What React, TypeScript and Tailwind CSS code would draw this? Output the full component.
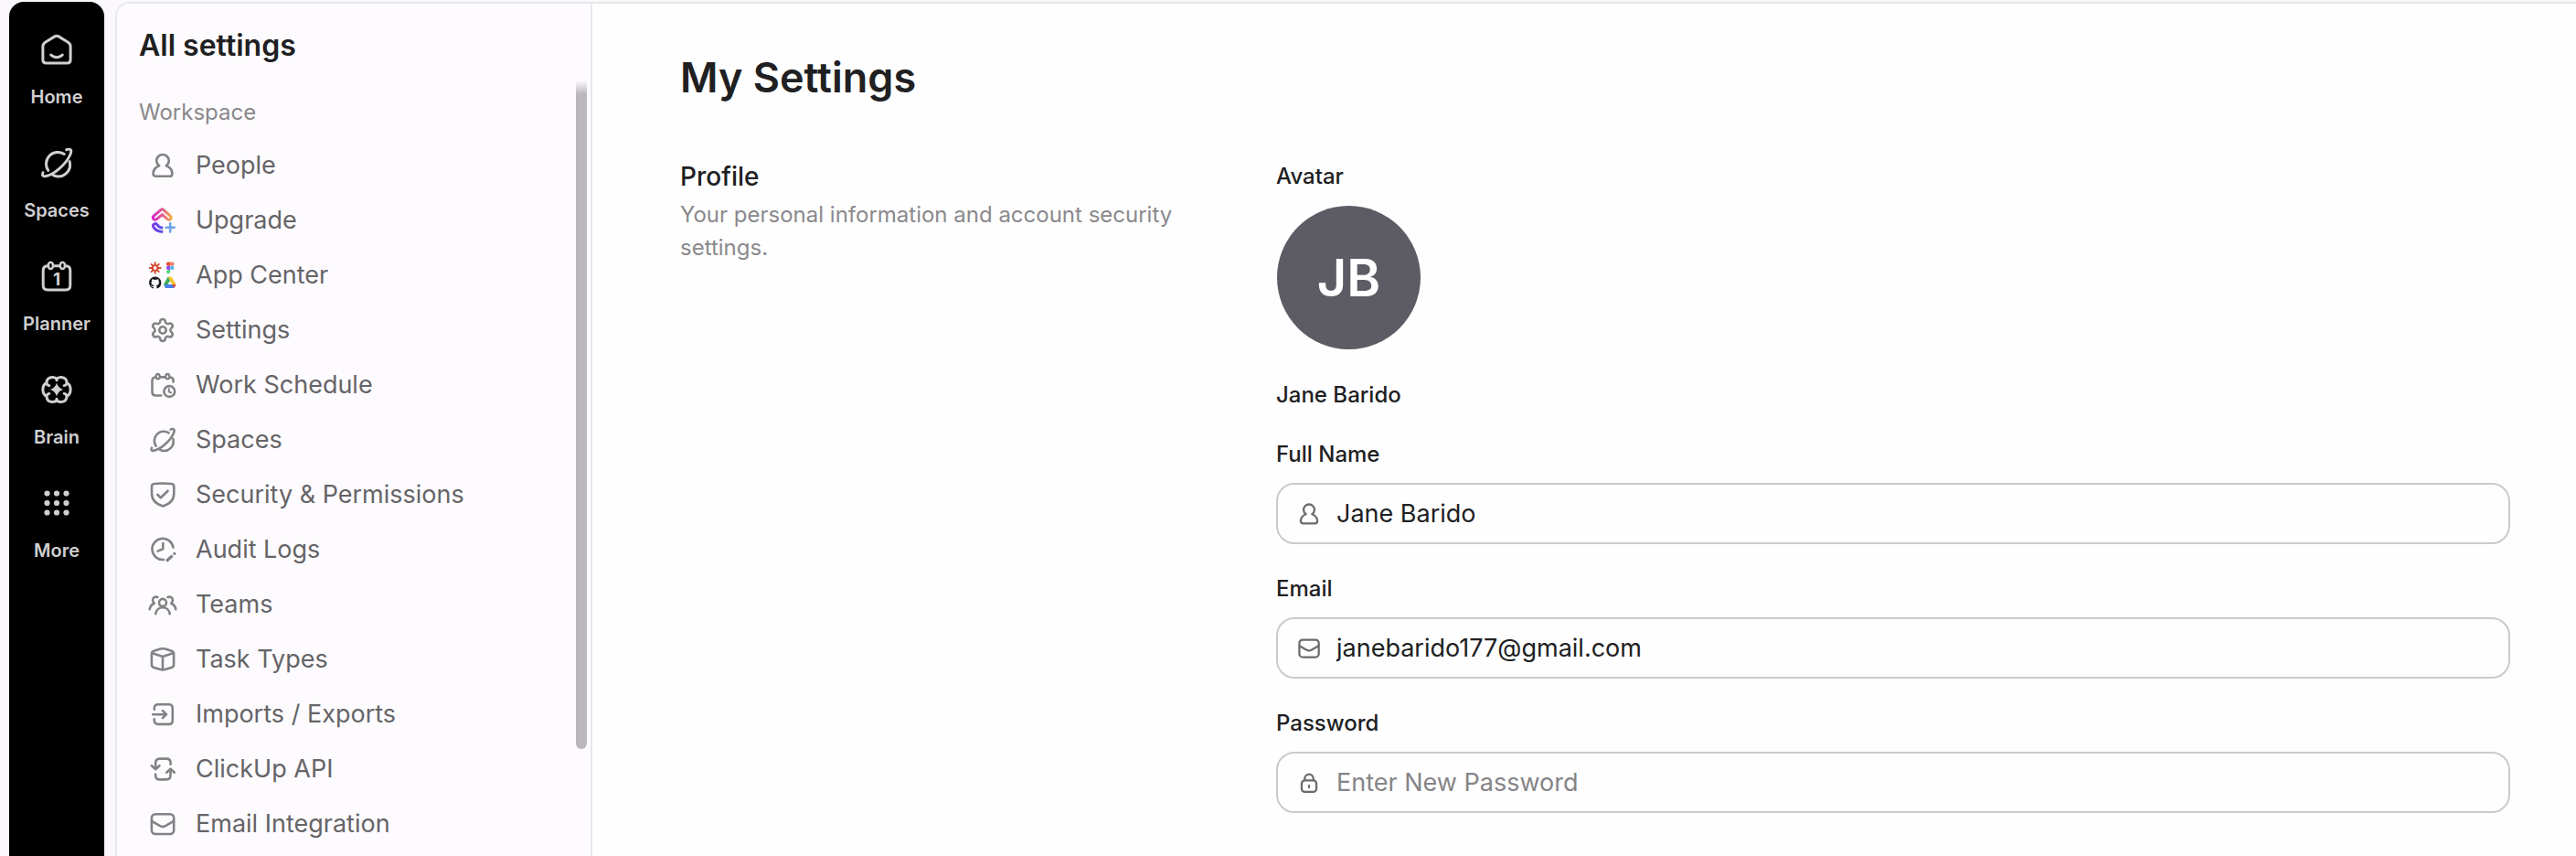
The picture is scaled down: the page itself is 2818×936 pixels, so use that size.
import React from "react";

type IconProps = { className?: string };

function Icon({ className = "size-8", children }: IconProps & { children: React.ReactNode }) {
  return (
    <svg
      viewBox="0 0 32 32"
      className={`shrink-0 ${className}`}
      fill="none"
      stroke="currentColor"
      strokeWidth={2.6}
      strokeLinecap="round"
      strokeLinejoin="round"
      aria-hidden="true"
    >
      {children}
    </svg>
  );
}

function RailIcon({ children }: { children: React.ReactNode }) {
  return (
    <svg
      viewBox="0 0 40 40"
      className="size-10 shrink-0"
      fill="none"
      stroke="currentColor"
      strokeWidth={3}
      strokeLinecap="round"
      strokeLinejoin="round"
      aria-hidden="true"
    >
      {children}
    </svg>
  );
}

const PersonIcon = ({ className }: IconProps) => (
  <Icon className={className}>
    <path d="M12.2 16.3C9.8 14.4 9.2 12.6 9.2 10.8a6.8 6.8 0 0 1 13.6 0c0 1.8-.6 3.6-3 5.5 4.2 1.6 6.6 5 6.6 8.6 0 2-1.2 2.9-3 2.9H8.6c-1.8 0-3-.9-3-2.9 0-3.6 2.4-7 6.6-8.6Z" />
  </Icon>
);

const UpgradeIcon = () => (
  <Icon>
    <defs>
      <linearGradient id="upg-top" x1="4" y1="0" x2="27" y2="0" gradientUnits="userSpaceOnUse">
        <stop offset="0" stopColor="#d91fd0" />
        <stop offset="0.55" stopColor="#e4628c" />
        <stop offset="1" stopColor="#f5b83c" />
      </linearGradient>
      <linearGradient id="upg-bottom" x1="4" y1="0" x2="17" y2="0" gradientUnits="userSpaceOnUse">
        <stop offset="0" stopColor="#7a35ee" />
        <stop offset="1" stopColor="#5b57e8" />
      </linearGradient>
    </defs>
    <path
      stroke="url(#upg-top)"
      strokeWidth="3"
      d="M6.2 11.2 14.1 4.3q1.3-1.1 2.6 0l7.7 6.9c1 1 1 2.4.2 3.3-.9 1-2.3 1-3.3.2L15.4 9.6l-6 5.1c-1 .9-2.5.8-3.4-.2-.8-1-.8-2.4.2-3.3Z"
    />
    <path
      stroke="url(#upg-bottom)"
      strokeWidth="3"
      strokeLinecap="butt"
      d="M16.2 28.4C11.6 28.2 8 26.4 5.9 23.3c-.8-1.3-.5-2.6.7-3.3 1.3-.8 2.7-.4 3.4.7 1.2 2 3.2 3.3 6.2 3.6"
    />
    <path stroke="#6ea4e8" d="M24.2 19.2v9.2M19.6 23.8h9.2" />
  </Icon>
);

const AppCenterIcon = () => (
  <Icon>
    <g stroke="#d2492f" strokeWidth="1.9" strokeLinecap="butt">
      <path d="M7.7 1.4v4.4M7.7 10.2v4.4M1.1 8h4.4M9.9 8h4.4M3.1 3.4l3 3M9.3 9.6l3 3M12.3 3.4l-3 3M6.1 9.6l-3 3" />
      <circle cx="7.7" cy="8" r="2.9" />
    </g>
    <g stroke="none">
      <path fill="#e2502f" d="M24.2 1.6h-2.3a2.1 2.1 0 0 0 0 4.2h2.3z" />
      <path fill="#ee7f72" d="M24.2 1.6h2.4a2.1 2.1 0 0 1 0 4.2h-2.4z" />
      <path fill="#9450f0" d="M24.2 5.8h-2.3a2.1 2.1 0 0 0 0 4.2h2.3z" />
      <circle fill="#4db4ee" cx="26.4" cy="7.9" r="2.1" />
      <path fill="#56cf86" d="M24.2 10h-2.3a2.1 2.1 0 1 0 2.3 2.1z" />
    </g>
    <g transform="translate(1.1 17.5) scale(0.83)">
      <path
        fill="#17161a"
        stroke="none"
        d="M8 0C3.58 0 0 3.58 0 8c0 3.54 2.29 6.53 5.47 7.59.4.07.55-.17.55-.38 0-.19-.01-.82-.01-1.49-2.01.37-2.53-.49-2.69-.94-.09-.23-.48-.94-.82-1.13-.28-.15-.68-.52-.01-.53.63-.01 1.08.58 1.23.82.72 1.21 1.87.87 2.33.66.07-.52.28-.87.51-1.07-1.78-.2-3.64-.89-3.64-3.95 0-.87.31-1.59.82-2.15-.08-.2-.36-1.02.08-2.12 0 0 .67-.21 2.2.82.64-.18 1.32-.27 2-.27s1.36.09 2 .27c1.53-1.04 2.2-.82 2.2-.82.44 1.1.16 1.92.08 2.12.51.56.82 1.27.82 2.15 0 3.07-1.87 3.75-3.65 3.95.29.25.54.73.54 1.48 0 1.07-.01 1.93-.01 2.2 0 .21.15.46.55.38A8.01 8.01 0 0 0 16 8c0-4.42-3.58-8-8-8z"
      />
    </g>
    <g stroke="none">
      <path fill="#3aa757" d="M21.6 17.8h2.1l2.1 3.7-4.6 8.3h-2.1l-2.1-3.9z" />
      <path fill="#f8c22d" d="M21.6 17.8h4.2l4.8 8.1h-4.3z" />
      <path fill="#4a80ee" d="M19.4 25.9h11.2l-2.1 4.1h-9.4l-1.4-2.4z" />
      <path fill="#dd4b39" d="M26.3 25.9h4.3l-2.1 4.1z" />
      <path fill="#fdfbfe" d="m23.8 21.9 2.3 4h-4.6z" />
    </g>
  </Icon>
);

const GearIcon = () => (
  <Icon>
    <g transform="translate(1.6 1.6) scale(1.2)" strokeWidth="2.15">
      <path d="M9.671 4.136a2.34 2.34 0 0 1 4.659 0 2.34 2.34 0 0 0 3.319 1.915 2.34 2.34 0 0 1 2.33 4.033 2.34 2.34 0 0 0 0 3.831 2.34 2.34 0 0 1-2.33 4.033 2.34 2.34 0 0 0-3.319 1.915 2.34 2.34 0 0 1-4.659 0 2.34 2.34 0 0 0-3.32-1.915 2.34 2.34 0 0 1-2.33-4.033 2.34 2.34 0 0 0 0-3.831A2.34 2.34 0 0 1 6.35 6.051a2.34 2.34 0 0 0 3.319-1.915" />
      <circle cx="12" cy="12" r="3.1" />
    </g>
  </Icon>
);

const ScheduleIcon = () => (
  <Icon>
    <path d="M7.8 7.5C5.4 7.7 4.5 9 4.5 11.2V23.8c0 2.6 1.1 3.7 3.7 3.7h6M13.2 7.4h5.6M24.2 7.5c2.4.2 3.4 1.5 3.4 3.7v1.4" />
    <ellipse cx="10.7" cy="6.7" rx="2" ry="2.7" strokeWidth="2.3" />
    <ellipse cx="21.3" cy="6.7" rx="2" ry="2.7" strokeWidth="2.3" />
    <circle cx="23.3" cy="23" r="5.9" />
    <path d="M22.8 20.4v2.8l2.2 1" strokeWidth="2.1" />
  </Icon>
);

const planet = (
  <>
    <path d="M8.6 22.7A10.2 10.2 0 0 1 22.6 8.4M27.3 14.9A10.2 10.2 0 0 1 13.1 26.9" />
    <path d="M4 24.6c-1 2.4-.2 3.5 2 3.2C13 26.9 24 17.6 27.8 9c1.8-4.2.6-5.8-3.3-4.4" />
  </>
);

const PlanetIcon = () => <Icon>{planet}</Icon>;

const ShieldIcon = () => (
  <Icon>
    <path d="M4 7q0-2.7 2.6-3Q16 2.9 25.7 4q2.6.3 2.6 3v7.5c0 7-5 11.8-12.1 13.9C9 26.3 4 21.5 4 14.5Z" />
    <path d="m10.2 15.8 3.7 3.5 7.7-7.6" />
  </Icon>
);

const AuditIcon = () => (
  <Icon>
    <path d="M17 27A11.6 11.6 0 1 1 27.5 13.6" />
    <path d="M16.3 9v6.2L10.6 17.6" />
    <path d="m21.2 27.6 4.4-4" strokeWidth="3.4" />
    <path d="M28.8 20.3h.1" strokeWidth="3.2" />
  </Icon>
);

const TeamsIcon = () => (
  <Icon>
    <circle cx="16" cy="13.9" r="4" />
    <path d="M8.2 26.2c.7-4.2 3.8-7 7.8-7s7.1 2.8 7.8 7" />
    <path d="M10.4 8C7.6 6.8 5 8.4 5.1 11.2c.1 1.7.7 2.7 1.7 3.5C4 16 2.1 18.3 1.7 21.3" />
    <path d="M21.6 8c2.8-1.2 5.4.4 5.3 3.2-.1 1.7-.7 2.7-1.7 3.5 2.8 1.3 4.7 3.6 5.1 6.6" />
  </Icon>
);

const CubeIcon = () => (
  <Icon>
    <path d="m6.4 6.7 7.1-2.1q2.5-.7 5 0l7.1 2.1Q28.1 7.6 28.1 10v11.7q0 2.4-2.5 3.2l-7.1 2.2q-2.5.7-5 0l-7.1-2.2q-2.5-.8-2.5-3.2V10q0-2.4 2.5-3.3Z" />
    <path d="M4.8 9.2 16 13l11.2-3.8M16 13v14" />
  </Icon>
);

const ImportIcon = () => (
  <Icon>
    <path d="M6.8 10.8V9.5q0-4.2 4.2-4.2h11.6q4.2 0 4.2 4.2v13.2q0 4.2-4.2 4.2H11q-4.2 0-4.2-4.2v-1.5" />
    <path d="M5.2 16.2h14.6M16 12.2l4 4-4 4" />
  </Icon>
);

const ApiIcon = () => (
  <Icon>
    <path d="M8.2 15.5V9.2q0-4.6 4.6-4.6h7.2q4.6 0 4.6 4.6v1.6M3.9 12.2l4.3 4 4.3-4" />
    <path d="M24.5 16.5v6.3q0 4.6-4.6 4.6h-7.2q-4.6 0-4.6-4.6v-1.3M20.2 19.7l4.3-4 4.3 4" />
  </Icon>
);

const MailIcon = ({ className }: IconProps) => (
  <Icon className={className}>
    <rect x="3.9" y="5.2" width="24.3" height="21.8" rx="4.2" />
    <path d="m4.5 13.2 8.6 4.9q2.9 1.5 5.8 0l8.6-4.9" />
  </Icon>
);

const LockIcon = ({ className }: IconProps) => (
  <Icon className={className}>
    <rect x="6.8" y="13" width="18.4" height="14.4" rx="4" />
    <path d="M10.6 12.8v-2a5.4 5.4 0 0 1 10.8 0v2M16 19.3v2.4" />
  </Icon>
);

const railItems = [
  {
    label: "Home",
    icon: (
      <RailIcon>
        <path d="M17.8 5.9q2.2-1.3 4.4 0L32.5 12.2q2.6 1.6 2.6 4.6V31.500q0 3.600-3.600 3.600h-23q-3.600 0-3.600-3.600V16.800q0-3 2.600-4.600Z" />
        <path d="M13.7 26c3.3 3.5 9.3 3.5 12.6 0" />
      </RailIcon>
    ),
  },
  {
    label: "Spaces",
    icon: (
      <RailIcon>
        <g transform="scale(1.25)" strokeWidth="2.4">
          {planet}
        </g>
      </RailIcon>
    ),
  },
  {
    label: "Planner",
    icon: (
      <RailIcon>
        <path d="M10 8.8c-3.2.2-4.8 1.8-4.8 5V30q0 5 5 5h19.6q5 0 5-5V13.8c0-3.2-1.6-4.8-4.8-5M16.6 8.8h6.6" />
        <ellipse cx="13.4" cy="8.4" rx="2.6" ry="3.6" strokeWidth="2.6" />
        <ellipse cx="26.4" cy="8.4" rx="2.6" ry="3.6" strokeWidth="2.6" />
        <text
          x="20"
          y="29.5"
          textAnchor="middle"
          fill="currentColor"
          stroke="none"
          fontSize="19"
          fontWeight="700"
          fontFamily="Inter, sans-serif"
        >
          1
        </text>
      </RailIcon>
    ),
  },
  {
    label: "Brain",
    icon: (
      <RailIcon>
        <path d="M20 8.4c1-1.4 2.9-2.1 5-2 3.5.2 6 2.5 6.1 6.3 2.6 1.3 4 4.2 4 7.3s-1.4 6-4 7.3c-.1 3.8-2.6 6.1-6.1 6.3-2.1.1-4-.6-5-2-1 1.4-2.9 2.1-5 2-3.5-.2-6-2.5-6.1-6.3-2.6-1.3-4-4.2-4-7.3s1.400-6 4-7.300C9 8.900 11.500 6.600 15 6.400c2.100-.1 4 .6 5 2Z" />
        <path d="M31 12.9c-.2 1.4-1.2 2.4-2.8 2.7M31 27.1c-.2-1.4-1.2-2.4-2.8-2.7M9 12.9c.2 1.4 1.2 2.4 2.8 2.7M9 27.1c.2-1.4 1.2-2.4 2.8-2.7M20 8.6v1.2M20 31.4v-1.2" />
        <path
          fill="currentColor"
          stroke="none"
          d="M20 12.800c1 3.600 3.600 6.200 7.200 7.200-3.600 1-6.200 3.600-7.200 7.200-1-3.600-3.600-6.200-7.200-7.200 3.600-1 6.200-3.600 7.200-7.200Z"
        />
      </RailIcon>
    ),
  },
  {
    label: "More",
    icon: (
      <RailIcon>
        <g fill="currentColor" stroke="none">
          {[9.5, 20, 30.5].map((y) =>
            [9.5, 20, 30.5].map((x) => <circle key={`${x}-${y}`} cx={x} cy={y} r="3.1" />),
          )}
        </g>
      </RailIcon>
    ),
  },
];

const menuItems = [
  { label: "People", icon: <PersonIcon /> },
  { label: "Upgrade", icon: <UpgradeIcon /> },
  { label: "App Center", icon: <AppCenterIcon /> },
  { label: "Settings", icon: <GearIcon /> },
  { label: "Work Schedule", icon: <ScheduleIcon /> },
  { label: "Spaces", icon: <PlanetIcon /> },
  { label: "Security & Permissions", icon: <ShieldIcon /> },
  { label: "Audit Logs", icon: <AuditIcon /> },
  { label: "Teams", icon: <TeamsIcon /> },
  { label: "Task Types", icon: <CubeIcon /> },
  { label: "Imports / Exports", icon: <ImportIcon /> },
  { label: "ClickUp API", icon: <ApiIcon /> },
  { label: "Email Integration", icon: <MailIcon /> },
];

type FieldProps = {
  id: string;
  label: string;
  type: string;
  icon: React.ReactNode;
  value?: string;
  placeholder?: string;
};

function Field({ id, label, type, icon, value, placeholder }: FieldProps) {
  return (
    <div className="mt-[33px]">
      <label htmlFor={id} className="block text-2xl/8 font-medium">
        {label}
      </label>
      <div className="mt-[15px] flex h-[67px] items-center gap-4 rounded-[20px] border-2 border-[#cbcacc] px-5 text-[#6b6a6d]">
        {icon}
        <input
          id={id}
          type={type}
          defaultValue={value}
          placeholder={placeholder}
          className="min-w-0 flex-1 bg-transparent pt-0.5 text-[27px] text-[#202022] outline-none placeholder:text-[#858487]"
        />
      </div>
    </div>
  );
}

export default function App() {
  return (
    <div className="flex h-screen overflow-hidden bg-[#faf8fc] pt-0.5 pl-2.5 font-['Inter','Liberation_Sans',sans-serif] text-[#202022]">
      <nav aria-label="Main" className="flex w-[104px] shrink-0 flex-col gap-10 rounded-t-2xl bg-black pt-8 shadow-sm">
        {railItems.map((item) => (
          <a key={item.label} href="#" className="flex flex-col items-center gap-5 text-[#d0cfd1]">
            {item.icon}
            <span className="text-xl/6 font-semibold">{item.label}</span>
          </a>
        ))}
      </nav>

      <div className="ml-3 flex min-w-0 flex-1 overflow-hidden rounded-tl-2xl border-t-2 border-l-2 border-[#e8e7ea] bg-[#fefefe]">
        <aside className="relative w-[520px] shrink-0 border-r-2 border-[#e8e7ea] bg-[#fdfbfe] pt-[26px]">
          <h2 className="px-6 text-[32px]/10 font-semibold">All settings</h2>
          <h3 className="mt-[37px] px-6 text-2xl/8 text-[#89888b]">Workspace</h3>
          <ul className="mt-3">
            {menuItems.map((item) => (
              <li key={item.label}>
                <a href="#" className="flex h-15 items-center gap-5 pl-[34px] text-[27px] text-[#656467]">
                  <span className="text-[#838285]">{item.icon}</span>
                  {item.label}
                </a>
              </li>
            ))}
          </ul>
          <div className="absolute top-[84px] right-1 h-[731px] w-3 rounded-b-full bg-linear-to-b from-transparent to-[#bab8bb] to-[15px]" />
        </aside>

        <main className="min-w-0 flex-1 pt-[51px] pr-[72px] pl-24">
          <h1 className="text-[45px]/[60px] font-semibold">My Settings</h1>
          <section className="mt-[58px] grid grid-cols-[652px_1fr]">
            <div>
              <h2 className="text-[28px]/10 font-medium">Profile</h2>
              <p className="mt-1 max-w-[580px] text-2xl/9 text-[#8a898c]">
                Your personal information and account security settings.
              </p>
            </div>
            <form className="pt-1">
              <p className="text-2xl/8 font-medium">Avatar</p>
              <button
                type="button"
                aria-label="Change avatar"
                className="mt-4 ml-px flex size-[157px] items-center justify-center rounded-full bg-[#5d5c65] text-[56px] font-semibold text-white"
              >
                JB
              </button>
              <p className="mt-[34px] text-2xl/8 font-medium">Jane Barido</p>
              <Field
                id="full-name"
                label="Full Name"
                type="text"
                value="Jane Barido"
                icon={<PersonIcon className="size-7" />}
              />
              <Field
                id="email"
                label="Email"
                type="email"
                value="janebarido177@gmail.com"
                icon={<MailIcon className="size-7" />}
              />
              <Field
                id="password"
                label="Password"
                type="password"
                placeholder="Enter New Password"
                icon={<LockIcon className="size-7" />}
              />
            </form>
          </section>
        </main>
      </div>
    </div>
  );
}
